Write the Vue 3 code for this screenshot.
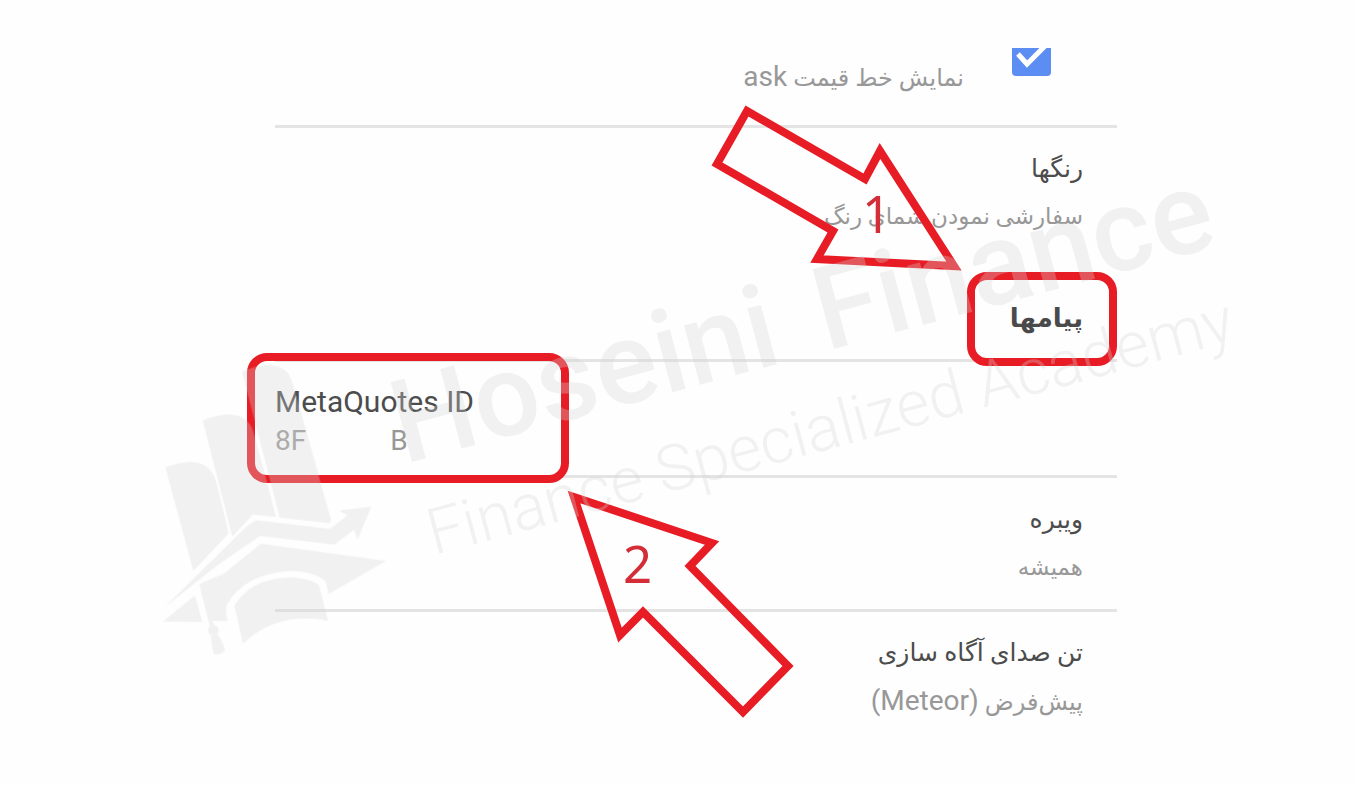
<script setup>
import { ref } from 'vue'

const askLine = ref(true)
</script>

<template>
  <main class="page" dir="rtl" lang="fa">
    <section class="panel">
      <label class="row row-check">
        <span class="check">
          <input v-model="askLine" type="checkbox" />
          <svg v-if="askLine" viewBox="0 0 39 39" aria-hidden="true">
            <path d="M6 17 L15 27 L35 7" />
          </svg>
        </span>
        <span class="note">نمایش خط قیمت <bdi class="latin">ask</bdi></span>
      </label>

      <div class="row row-colors">
        <h2 class="title">رنگها</h2>
        <p class="note">سفارشی نمودن شمای رنگ</p>
      </div>

      <div class="row row-messages">
        <h1 class="heading">پیامها</h1>
      </div>

      <div class="row row-id" dir="ltr" lang="en">
        <h2 class="title latin">MetaQuotes ID</h2>
        <p class="note latin code"><span>8F</span><span>B</span></p>
      </div>

      <div class="row row-vibrate">
        <h2 class="title">ویبره</h2>
        <p class="note">همیشه</p>
      </div>

      <div class="row row-sound">
        <h2 class="title">تن صدای آگاه سازی</h2>
        <p class="note">پیش‌فرض <bdi class="latin">(Meteor)</bdi></p>
      </div>
    </section>

    <svg class="overlay" viewBox="0 0 1357 785" direction="ltr" lang="en">
      <g class="arrows">
        <path d="M747 111 L865 179 L880 151 L954 266 L817 259 L833 231 L717 164 Z" />
        <path d="M574 497 L712 543 L690 566 L788 666 L743 712 L643 612 L620 635 Z" />
      </g>
      <text class="digit" x="862" y="233">1</text>
      <text class="digit" x="623" y="583">2</text>

      <g class="mark">
        <g transform="translate(150 340) scale(0.3333)">
          <path d="M46 382 Q80 369 115 366 Q170 364 192 408 Q199 422 236 580 L130 693 Z" />
          <path d="M158 241 Q195 226 230 223 Q285 222 305 262 Q312 275 378 531 L308 524 L247 590 Z" />
          <path d="M276 95 Q320 77 345 75 Q405 73 423 115 Q430 130 543 540 Q544 550 534 549 L389 533 Z" />
          <path d="M42 803 L280 568 Q310 540 325 541 L535 566 Q540 566 546 562 L592 526 L568 511 L664 500 L623 598 L612 569 L553 614 L330 588 L205 674 Z" />
          <path d="M38 845 L135 766 L157 846 Z" />
          <path d="M148 734 Q150 730 220 702 L333 611 L708 663 L536 762 L528 730 Q527 722 518 717 Q480 692 415 693 Q280 705 230 795 Q225 815 234 843 L188 843 L193 858 L179 858 Z" />
          <circle cx="190" cy="871" r="16" />
          <path d="M183 887 L204 883 Q223 915 225 932 Q215 944 193 944 Q184 925 183 887 Z" />
          <path d="M253 797 Q300 717 415 712 Q470 712 502 731 Q507 735 508 740 L534 843 Q385 812 279 911 Z" />
        </g>
        <g transform="translate(404 464) rotate(-15)">
          <text class="brand">Hoseini</text>
          <text class="brand" x="437">Finance</text>
        </g>
        <text class="tagline" transform="translate(434 555) rotate(-15)">Finance Specialized Academy</text>
      </g>
    </svg>
  </main>
</template>

<style>
body {
  margin: 0;
  background: #fefefe;
}
</style>

<style scoped>
.page {
  position: relative;
  box-sizing: border-box;
  min-height: 100vh;
  padding: 48px 240px 40px 275px;
  font-family: Roboto, "DejaVu Sans", sans-serif;
}

.row {
  box-sizing: border-box;
  position: relative;
  padding-inline-start: 34px;
  border-bottom: 3px solid #e4e4e4;
}

.title,
.heading,
.note {
  margin: 0;
  white-space: nowrap;
}

.title {
  font-size: 25px;
  line-height: 48px;
  font-weight: 400;
  color: #4c4c4c;
}

.heading {
  font-size: 26px;
  line-height: 48px;
  font-weight: 700;
  color: #4a4a4c;
}

.note {
  font-size: 24px;
  line-height: 48px;
  color: #989898;
}

.row-colors .note,
.row-vibrate .note {
  font-size: 23px;
}

.title.latin {
  font-size: 30px;
  line-height: 40px;
}

.note .latin,
.note.latin {
  font-size: 28px;
}

.row-check {
  display: flex;
  gap: 48px;
  height: 80px;
  padding-inline-start: 66px;
  overflow: hidden;
}

.row-check .note {
  padding-top: 5px;
}

.check {
  position: relative;
  width: 39px;
  height: 39px;
  margin-top: -11px;
}

.check input {
  appearance: none;
  display: block;
  width: 39px;
  height: 39px;
  margin: 0;
  border-radius: 4px;
  background: #5c8df2;
}

.check svg {
  position: absolute;
  inset: 0;
  fill: none;
  stroke: #fff;
  stroke-width: 5;
  pointer-events: none;
}

.row-colors {
  height: 144px;
  padding-top: 17px;
  border-bottom: 0;
}

.row-messages {
  height: 90px;
  padding-top: 22px;
}

.row-messages::after,
.row-id::after {
  content: "";
  position: absolute;
  box-sizing: border-box;
  border: 8px solid #e81c25;
  border-radius: 20px;
  z-index: 1;
}

.row-messages::after {
  top: 0;
  right: 0;
  width: 150px;
  height: 94px;
}

.row-id {
  height: 116px;
  padding: 20px 0 0;
}

.row-id::after {
  top: -9px;
  left: -28px;
  width: 322px;
  height: 130px;
}

.code {
  display: flex;
  gap: 84px;
  line-height: 38px;
}

.row-vibrate {
  height: 134px;
  padding-top: 18px;
}

.row-sound {
  padding-top: 17px;
  border-bottom: 0;
}

.overlay {
  position: absolute;
  top: 0;
  left: 0;
  width: 100%;
  z-index: 2;
  pointer-events: none;
}

.arrows path {
  fill: none;
  stroke: #e81c25;
  stroke-width: 8;
  stroke-miterlimit: 10;
}

.digit {
  font-family: "Noto Sans", "Open Sans", sans-serif;
  font-size: 51px;
  fill: #d42d38;
}

.mark {
  fill: #d5d5d5;
  opacity: 0.31;
}

.brand {
  font-family: Roboto, sans-serif;
  font-size: 116px;
  font-weight: 500;
}

.tagline {
  font-family: Roboto, sans-serif;
  font-size: 64px;
  font-weight: 300;
}
</style>
